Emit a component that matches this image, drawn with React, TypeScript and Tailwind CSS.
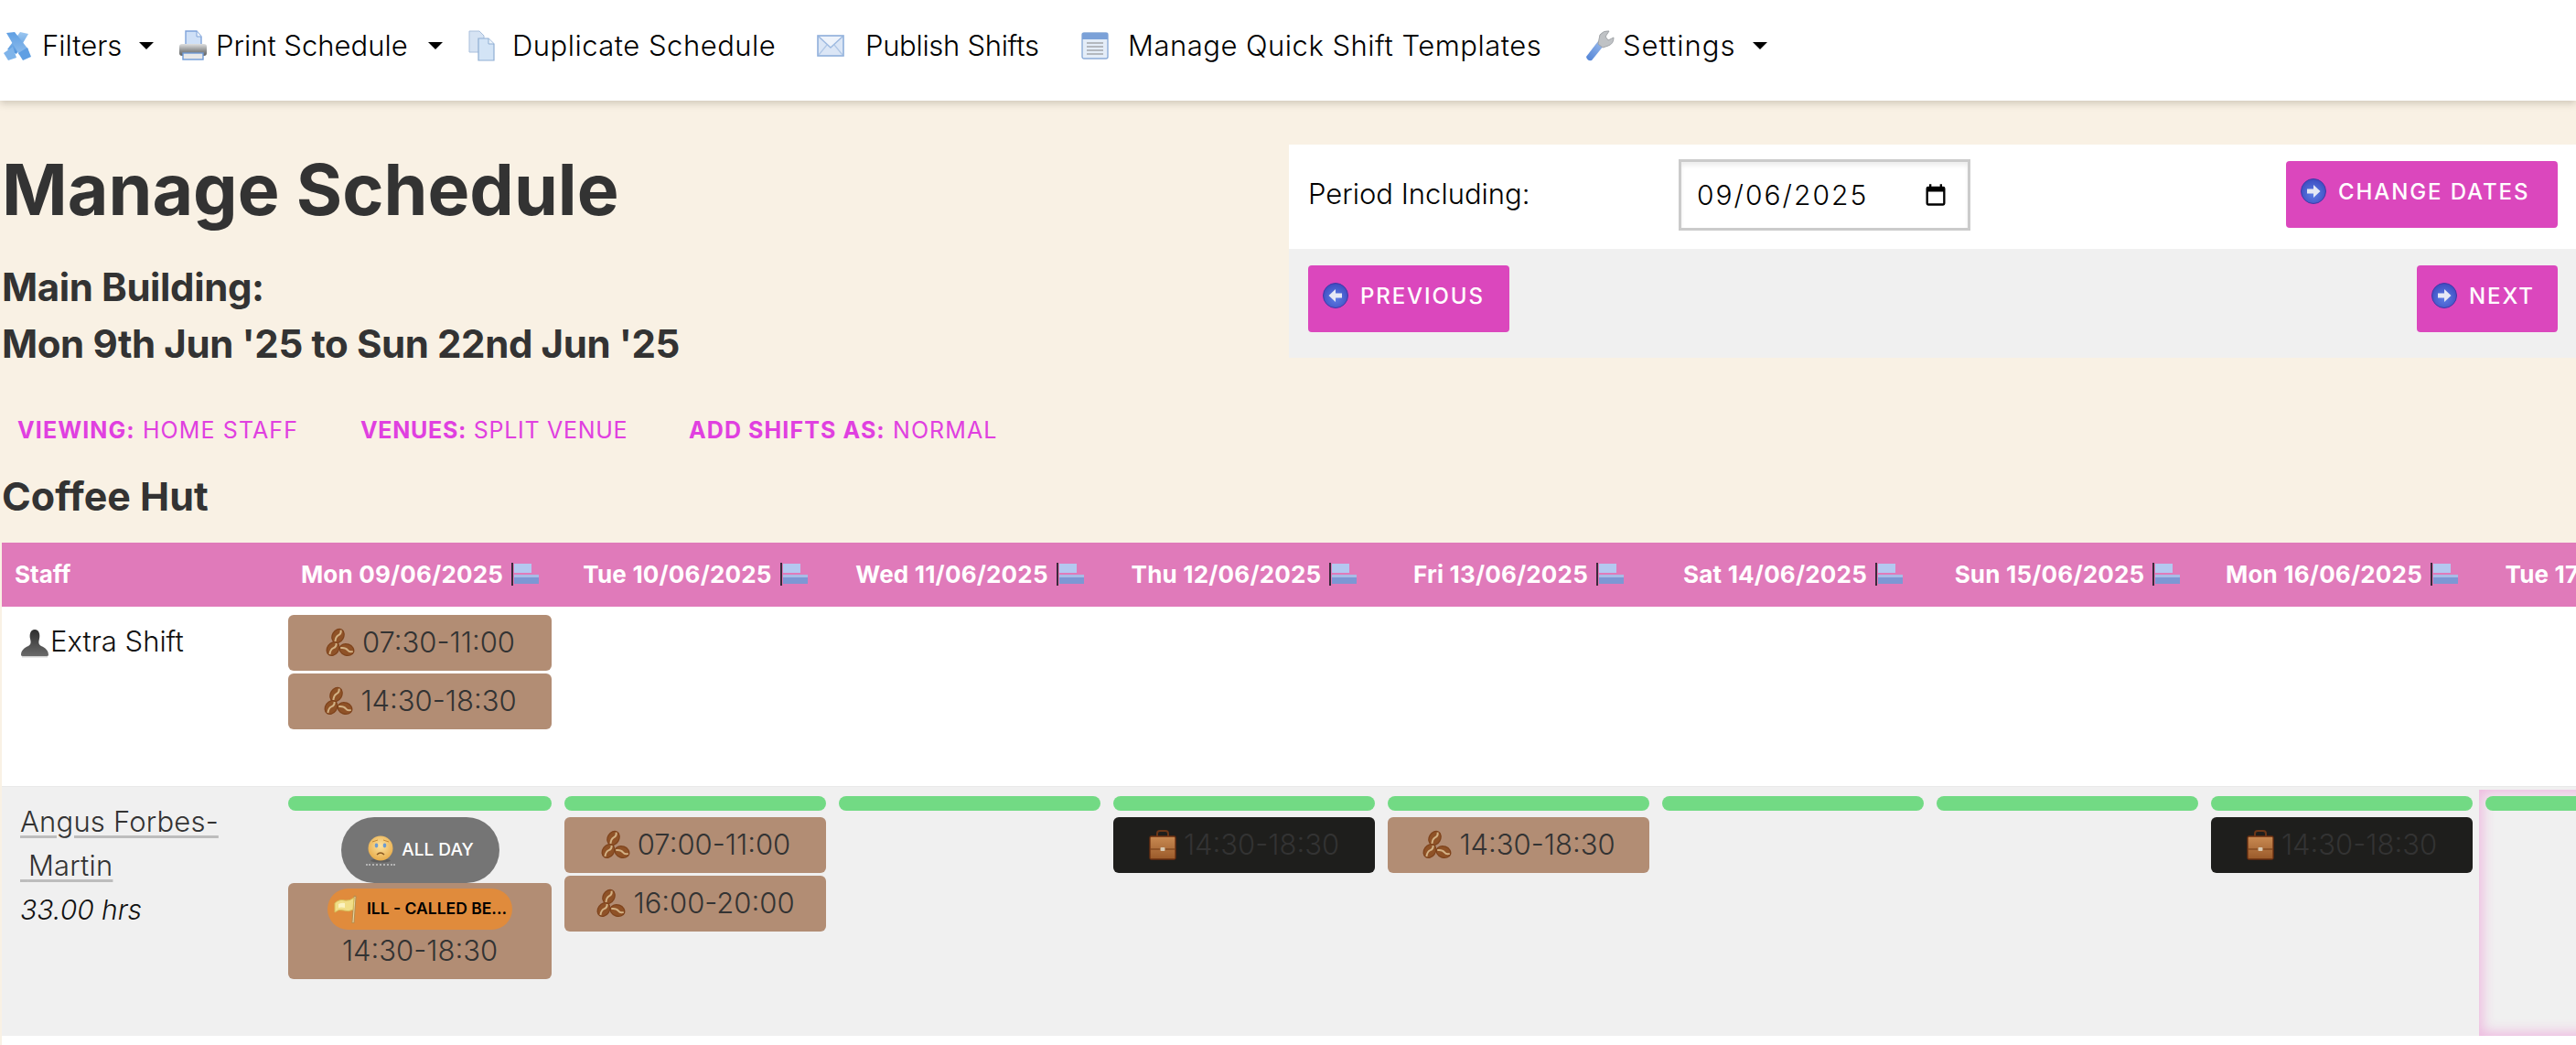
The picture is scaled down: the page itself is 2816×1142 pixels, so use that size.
import React from "react";

const Filter = () => (
  <svg width="32" height="33" viewBox="0 0 32 33" className="shrink-0">
    <defs>
      <linearGradient id="fa" x1="0" y1="0" x2="0" y2="1"><stop offset="0" stopColor="#9cc7f0" /><stop offset="1" stopColor="#4f93dc" /></linearGradient>
      <linearGradient id="fb" x1="0" y1="0" x2="0" y2="1"><stop offset="0" stopColor="#5f9fe3" /><stop offset="1" stopColor="#8fbdec" /></linearGradient>
    </defs>
    <path d="M19 1 L28 3 L15 25 L5 20 Z" fill="url(#fa)" />
    <path d="M4 2 L13 1 L28 20 L18 26 Z" fill="url(#fb)" />
    <path d="M1 24 L11 17 L15 29 L6 32 Z" fill="#7fb4ea" />
    <path d="M17 24 L27 18 L31 28 L22 32 Z" fill="#5f9fe3" />
  </svg>
);
const Printer = () => (
  <svg width="32" height="34" viewBox="0 0 32 34" className="shrink-0">
    <defs><linearGradient id="pa" x1="0" y1="0" x2="0" y2="1"><stop offset="0" stopColor="#dfe0e0" /><stop offset="0.55" stopColor="#8f9192" /><stop offset="1" stopColor="#5f6162" /></linearGradient></defs>
    <path d="M8 1 H20 L25 7 V18 H8 Z" fill="#cfe0f7" stroke="#7fa3da" strokeWidth="1.4" />
    <path d="M20 1 V7 H25" fill="#eef4fc" stroke="#7fa3da" />
    <rect x="1" y="15" width="30" height="13" rx="3" fill="url(#pa)" />
    <rect x="5" y="25" width="22" height="7" fill="#e8e8e8" stroke="#6e9ad8" strokeWidth="1.4" />
  </svg>
);
const Copy = () => (
  <svg width="30" height="34" viewBox="0 0 30 34" className="shrink-0">
    <path d="M1 1 H12 L17 6 V24 H1 Z" fill="#d6e3f3" stroke="#a9bfdc" />
    <path d="M11 9 H22 L28 15 V33 H11 Z" fill="#d3e4f6" stroke="#8faed3" strokeWidth="1.2" />
    <path d="M22 9 V15 H28" fill="#edf4fb" stroke="#8faed3" />
  </svg>
);
const Mail = () => (
  <svg width="30" height="26" viewBox="0 0 30 26" className="shrink-0">
    <rect x="1" y="2" width="28" height="22" fill="#dbe6f6" stroke="#8fafdb" strokeWidth="1.6" />
    <path d="M2 3 L15 15 L28 3" fill="#eef3fb" stroke="#9db9e0" strokeWidth="1.5" />
    <path d="M2 23 L11 12 M28 23 L19 12" stroke="#b0c7e6" strokeWidth="1.2" />
  </svg>
);
const Template = () => (
  <svg width="30" height="30" viewBox="0 0 30 30" className="shrink-0">
    <rect x="1" y="1" width="28" height="28" rx="2" fill="#e4edf8" stroke="#8cacd8" strokeWidth="1.4" />
    <rect x="1" y="1" width="28" height="7" fill="#7ba1d8" />
    <path d="M6 12 H24 M6 16 H24 M6 20 H24 M6 24 H24" stroke="#a3a6aa" strokeWidth="1.6" />
  </svg>
);
const Wrench = () => (
  <svg width="32" height="34" viewBox="0 0 32 34" className="shrink-0">
    <defs><linearGradient id="wa" x1="0" y1="1" x2="1" y2="0"><stop offset="0" stopColor="#4f82d6" /><stop offset="1" stopColor="#9dbcec" /></linearGradient></defs>
    <path d="M1 29 L14 12 L20 17 L7 33 Q2 34 1 29 Z" fill="url(#wa)" />
    <path d="M14 15 L16 5 Q20 0 26 1 L22 7 L25 11 L31 8 Q31 15 25 17 L19 19 Z" fill="#bfc2c5" stroke="#a1a4a8" />
  </svg>
);
const Gantt = () => (
  <svg width="30" height="25" viewBox="0 0 30 25" className="shrink-0">
    <rect x="0" y="0" width="2" height="25" fill="#3b2a3a" />
    <rect x="3" y="1" width="19" height="10" fill="#b4c8f0" />
    <rect x="3" y="13" width="27" height="10" fill="#7d97d4" />
    <rect x="3" y="13" width="27" height="3" fill="#a8bce6" />
  </svg>
);
const Arrow = ({ left = false }: { left?: boolean }) => (
  <svg width="28" height="28" viewBox="0 0 28 28" className="shrink-0">
    <defs><radialGradient id="aa" cx="0.5" cy="0.6" r="0.6"><stop offset="0" stopColor="#5f7fe6" /><stop offset="1" stopColor="#3c4cc0" /></radialGradient></defs>
    <circle cx="14" cy="14" r="13.5" fill="url(#aa)" stroke="#4338a8" />
    <g transform={left ? "matrix(-1 0 0 1 28 0)" : undefined}>
      <path d="M7 11.5 H14 V7 L21.5 14 L14 21 V16.5 H7 Z" fill="#e6e8f5" />
    </g>
  </svg>
);
const Person = () => (
  <svg width="32" height="32" viewBox="0 0 32 32" className="shrink-0 mt-[6px]">
    <defs><linearGradient id="ua" x1="0" y1="0" x2="0" y2="1"><stop offset="0" stopColor="#2e2e2e" /><stop offset="1" stopColor="#6a6a6a" /></linearGradient></defs>
    <path d="M16 1 C21 1 22 7 21 11 C20 15 20 17 23 19 C28 21 31 24 31 29 Q31 30 29 30 H3 Q1 30 1 29 C1 24 4 21 9 19 C12 17 12 15 11 11 C10 7 11 1 16 1 Z" fill="url(#ua)" />
    <rect x="2" y="30" width="28" height="1.5" fill="#d4d4d4" />
  </svg>
);
const Bean = ({ x, y, r }: { x: number; y: number; r: number }) => (
  <g transform={`translate(${x} ${y}) rotate(${r})`}>
    <ellipse cx="0" cy="0" rx="8.6" ry="6.8" fill="#7e431c" />
    <ellipse cx="0" cy="0" rx="7.4" ry="5.6" fill="#8f5227" />
    <path d="M-7 0.5 Q-2 -2 1 0 Q4 2 7 -0.5" fill="none" stroke="#d2b184" strokeWidth="2" />
  </g>
);
const Beans = () => (
  <svg width="33" height="33" viewBox="0 0 33 33" className="shrink-0">
    <Bean x={14.5} y={9} r={-60} />
    <Bean x={9} y={23} r={-55} />
    <Bean x={24} y={24} r={20} />
  </svg>
);
const Sad = () => (
  <span className="inline-flex w-[32px] h-[33px] border-b-[2px] border-dotted border-[#b4b4b4] shrink-0">
    <svg width="30" height="30" viewBox="0 0 30 30" className="ml-[1px]">
      <defs><radialGradient id="sa" cx="0.5" cy="0.4" r="0.6"><stop offset="0" stopColor="#fde3a0" /><stop offset="1" stopColor="#e8ac4a" /></radialGradient></defs>
      <ellipse cx="15" cy="27.5" rx="11" ry="2" fill="#5f5f5f" />
      <circle cx="15" cy="14" r="13.5" fill="url(#sa)" />
      <ellipse cx="10.5" cy="11" rx="1.8" ry="2.4" fill="#6d9bd0" />
      <ellipse cx="19.5" cy="11" rx="1.8" ry="2.4" fill="#6d9bd0" />
      <path d="M6 7 L12 5 M24 7 L18 5" stroke="#c58a36" strokeWidth="1" />
      <path d="M11 21 Q15 17 19 21" fill="none" stroke="#8a5a22" strokeWidth="1.5" />
    </svg>
  </span>
);
const Flag = () => (
  <svg width="29" height="31" viewBox="0 0 29 31" className="shrink-0">
    <path d="M23 2 L21 30" stroke="#b98f4e" strokeWidth="3.2" strokeLinecap="round" />
    <path d="M23 2 L21 30" stroke="#e8d9a8" strokeWidth="1" />
    <path d="M1 9 Q6 4 12 6 Q17 7 22 3 L21 16 Q16 19 11 17 Q5 15 1 19 Z" fill="#f1de87" stroke="#d6bd58" />
    <path d="M5 10 Q9 8 12 9 V14 Q8 13 5 14 Z" fill="#fbf3c2" />
  </svg>
);
const Case = () => (
  <svg width="30" height="33" viewBox="0 0 30 33" className="shrink-0">
    <defs><linearGradient id="ca" x1="0" y1="0" x2="0" y2="1"><stop offset="0" stopColor="#c98a52" /><stop offset="1" stopColor="#9a5a2a" /></linearGradient></defs>
    <path d="M9 8 V4 Q9 1 12 1 H18 Q21 1 21 4 V8" fill="none" stroke="#6b3618" strokeWidth="2" />
    <rect x="1" y="7" width="28" height="25" rx="1.5" fill="url(#ca)" stroke="#6b2f10" strokeWidth="1.3" />
    <path d="M1 21 H29" stroke="#7c421c" strokeWidth="1.2" />
    <rect x="12.5" y="19" width="5" height="4" rx="1" fill="#d8c8b0" />
  </svg>
);
const Caret = () => (
  <span className="w-0 h-0 border-x-[8px] border-x-transparent border-t-[8px] border-t-black shrink-0" />
);
const Calendar = () => (
  <svg width="28" height="28" viewBox="0 0 24 24" className="shrink-0">
    <path d="M19 4h-1V2h-2v2H8V2H6v2H5a2 2 0 0 0-2 2v14a2 2 0 0 0 2 2h14a2 2 0 0 0 2-2V6a2 2 0 0 0-2-2zm0 16H5V9h14v11z" fill="#000" />
  </svg>
);

const dates = ["Mon 09/06/2025","Tue 10/06/2025","Wed 11/06/2025","Thu 12/06/2025","Fri 13/06/2025","Sat 14/06/2025","Sun 15/06/2025","Mon 16/06/2025","Tue 17/06/2025"];

const Chip = ({ time, dark = false }: { time: string; dark?: boolean }) => (
  <div className={`h-[61px] rounded-[6px] flex items-center justify-center gap-[8px] text-[31px] font-light text-[#333] ${dark ? "bg-[#1e1e1c]" : "bg-[#b28d74]"}`}>
    {dark ? <Case /> : <Beans />}
    <span>{time}</span>
  </div>
);
const Bar = () => <div className="h-[16px] rounded-full bg-[#72da84] mb-[7px]" />;

const Btn = ({ label, left = false, w }: { label: string; left?: boolean; w: string }) => (
  <div className={`${w} h-[73px] rounded-[4px] bg-[#db47bd] flex items-start pt-[19px] pl-[16px] gap-[13px] text-white text-[24px] font-medium tracking-[1.9px]`}>
    <Arrow left={left} />
    <span className="leading-[28px] mt-[1px] whitespace-nowrap">{label}</span>
  </div>
);

export default function App() {
  return (
    <div className="w-[2816px] h-[1142px] overflow-hidden bg-[#f9f1e4] text-[#333] font-['Inter',sans-serif]">
      <nav className="relative z-10 h-[110px] bg-white shadow-[0_3px_8px_rgba(60,50,30,0.22)] flex items-center text-black text-[31px] font-light pb-[10px] pl-[3px]">
        <Filter />
        <span className="ml-[11px] w-[106px] whitespace-nowrap">Filters</span>
        <Caret />
        <span className="ml-[27px]"><Printer /></span>
        <span className="ml-[9px] w-[232px] whitespace-nowrap">Print Schedule</span>
        <Caret />
        <span className="ml-[28px]"><Copy /></span>
        <span className="ml-[18px] w-[333px] whitespace-nowrap tracking-[0.5px]">Duplicate Schedule</span>
        <Mail />
        <span className="ml-[23px] w-[236px] whitespace-nowrap tracking-[-0.3px]">Publish Shifts</span>
        <Template />
        <span className="ml-[21px] w-[500px] whitespace-nowrap tracking-[0.5px]">Manage Quick Shift Templates</span>
        <Wrench />
        <span className="ml-[9px] w-[142px] whitespace-nowrap tracking-[1px]">Settings</span>
        <Caret />
      </nav>

      <div className="h-[483px] flex items-start">
        <div className="w-[1409px] pl-[2px] shrink-0">
          <h1 className="mt-[57px] text-[77px] leading-[80px] font-bold whitespace-nowrap">Manage Schedule</h1>
          <h3 className="mt-[36px] text-[42px] leading-[62px] font-bold tracking-[-0.4px]">
            Main Building:
            <br />
            Mon 9th Jun '25 to Sun 22nd Jun '25
          </h3>
          <div className="mt-[48px] ml-[17px] h-[30px] flex text-[25px] leading-[30px] text-[#e040e0] tracking-[1.1px] whitespace-nowrap">
            <span className="w-[375px]"><b>VIEWING:</b> HOME STAFF</span>
            <span className="w-[359px] tracking-[0.7px]"><b>VENUES:</b> SPLIT VENUE</span>
            <span><b>ADD SHIFTS AS:</b> NORMAL</span>
          </div>
          <h3 className="mt-[26px] text-[43px] leading-[62px] font-bold">Coffee Hut</h3>
        </div>
        <div className="mt-[48px] flex-1">
          <div className="h-[114px] bg-white flex items-start pl-[21px] pr-[20px] text-black">
            <span className="w-[405px] mt-[36px] text-[31px] font-light leading-[36px] whitespace-nowrap">Period Including:</span>
            <div className="mt-[16px] w-[319px] h-[78px] border-[3px] border-[#cbcbcb] shadow-[inset_0_4px_4px_rgba(0,0,0,0.07)] flex items-center pl-[17px] pr-[21px] justify-between text-[30px] font-light">
              <span className="tracking-[2px]">09/06/2025</span>
              <Calendar />
            </div>
            <div className="ml-auto mt-[18px]"><Btn label="CHANGE DATES" w="w-[297px]" /></div>
          </div>
          <div className="h-[119px] bg-[#f0f0f0] flex items-start justify-between pl-[21px] pr-[20px] pt-[18px]">
            <Btn label="PREVIOUS" left w="w-[220px]" />
            <Btn label="NEXT" w="w-[154px]" />
          </div>
        </div>
      </div>

      <div className="ml-[2px] w-[2814px] overflow-hidden">
        <div className="grid grid-cols-[306px_302px_repeat(8,300px)] w-[3008px] bg-[#e07aba] h-[70px] items-center text-white font-bold text-[26px] whitespace-nowrap pb-[2px]">
          <div className="pl-[14px]">Staff</div>
          {dates.map((d) => (
            <div key={d} className="flex items-center justify-center gap-[9px] tracking-[0.2px]">
              <span>{d}</span>
              <Gantt />
            </div>
          ))}
        </div>
        <div className="grid grid-cols-[306px_302px_repeat(8,300px)] w-[3008px] bg-white h-[196px]">
          <div className="pl-[20px] pt-[18px] flex items-start gap-[1px] text-[31px] font-light leading-[40px] text-[#111]">
            <Person />
            <span>Extra Shift</span>
          </div>
          <div className="px-[7px] pt-[9px] flex flex-col gap-[3px]">
            <Chip time="07:30-11:00" />
            <Chip time="14:30-18:30" />
          </div>
        </div>
        <div className="grid grid-cols-[306px_302px_repeat(8,300px)] w-[3008px] bg-[#f0f0f0] h-[273px] border-t border-[#e9e9e9]">
          <div className="pl-[20px] pt-[14px] text-[31px] font-light leading-[48px] text-[#333]">
            <span className="underline decoration-[#bdbdbd] decoration-[3px] underline-offset-[4px] tracking-[0.2px]">
              Angus Forbes-
              <br />
              {"\u00a0"}Martin
            </span>
            <div className="italic text-[#111] text-[30px]">33.00 hrs</div>
          </div>
          <div className="px-[7px] pt-[10px]">
            <Bar />
            <div className="flex justify-center">
              <div className="w-[173px] h-[72px] rounded-full bg-[#757575] flex items-center justify-center gap-[7px] text-white text-[19px] font-medium">
                <Sad />
                <span>ALL DAY</span>
              </div>
            </div>
            <div className="h-[105px] rounded-[6px] bg-[#b28d74] flex flex-col items-center pt-[6px]">
              <div className="w-[202px] h-[45px] rounded-full bg-[#e08b3c] flex items-center pl-[7px] gap-[7px] text-black text-[17.5px] font-semibold whitespace-nowrap">
                <Flag />
                <span>ILL - CALLED BE...</span>
              </div>
              <div className="text-[31px] font-light leading-[40px] mt-[3px]">14:30-18:30</div>
            </div>
          </div>
          <div className="px-[7px] pt-[10px]">
            <Bar />
            <div className="flex flex-col gap-[3px]">
              <Chip time="07:00-11:00" />
              <Chip time="16:00-20:00" />
            </div>
          </div>
          <div className="px-[7px] pt-[10px]"><Bar /></div>
          <div className="px-[7px] pt-[10px]"><Bar /><Chip time="14:30-18:30" dark /></div>
          <div className="px-[7px] pt-[10px]"><Bar /><Chip time="14:30-18:30" /></div>
          <div className="px-[7px] pt-[10px]"><Bar /></div>
          <div className="px-[7px] pt-[10px]"><Bar /></div>
          <div className="px-[7px] pt-[10px]"><Bar /><Chip time="14:30-18:30" dark /></div>
          <div className="mt-[3px] px-[7px] pt-[7px] shadow-[inset_0_0_14px_4px_#eebbe0] h-[269px]"><Bar /></div>
        </div>
        <div className="h-[10px] bg-white" />
      </div>
    </div>
  );
}
